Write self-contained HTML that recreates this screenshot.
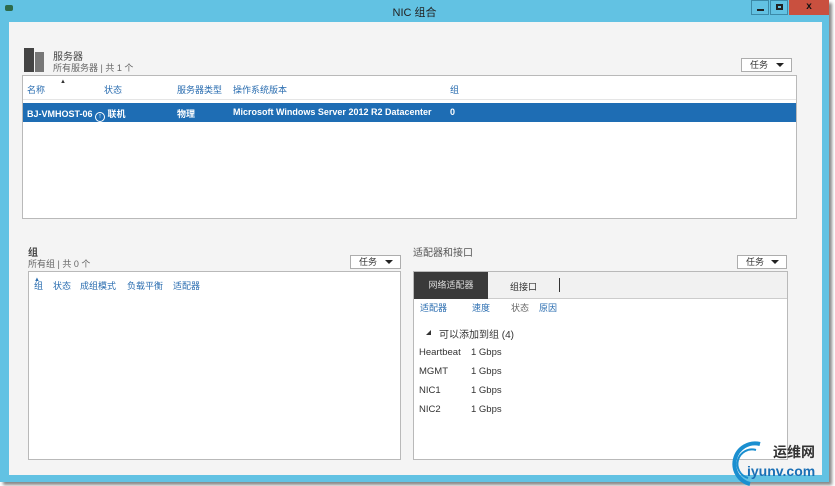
<!DOCTYPE html>
<html><head><meta charset="utf-8"><style>
*{margin:0;padding:0;box-sizing:border-box}
body{width:835px;height:486px;background:#fff;font-family:"Liberation Sans","Noto Sans CJK SC",sans-serif;font-size:9px;color:#333;position:relative;overflow:hidden}
.a{position:absolute}
.frame{left:0;top:0;width:829px;height:482px;background:#62c2e3;box-shadow:3px 3px 3px #888}
.content{left:9px;top:22px;width:813px;height:453px;background:#f4f4f4}
.box{background:#fff;border:1px solid #b9b9b9}
.task{background:#fff;border:1px solid #adadad;font-size:9px;padding-left:8px;line-height:12px;color:#333}
.task:after{content:"";position:absolute;right:7px;top:4px;border:4px solid transparent;border-top:4px solid #222;border-bottom:0}
.blue{color:#2a6db0}
</style></head><body>
<div class="a frame"></div>
<div class="a" style="left:5px;top:5px;width:8px;height:6px;background:#2d6b4a;border-radius:2px"></div>
<div class="a" style="left:0;top:4px;width:829px;text-align:center;font-size:11px;color:#222">NIC 组合</div>
<div class="a" style="left:751px;top:0;width:18px;height:15px;border:1px solid #3c8aa8;background:#62c2e3"><div class="a" style="left:5px;top:8px;width:7px;height:2px;background:#222"></div></div>
<div class="a" style="left:770px;top:0;width:18px;height:15px;border:1px solid #3c8aa8;background:#62c2e3"><div class="a" style="left:5px;top:3px;width:7px;height:6px;border:2px solid #222"></div></div>
<div class="a" style="left:789px;top:0;width:40px;height:15px;background:#c9503f;color:#111;font-weight:bold;text-align:center;font-size:10px;line-height:14px">x</div>
<div class="a content"></div>

<!-- servers -->
<div class="a" style="left:24px;top:48px;width:10px;height:24px;background:#444"></div>
<div class="a" style="left:35px;top:52px;width:9px;height:20px;background:#777"></div>
<div class="a" style="left:53px;top:48px;font-size:10px;color:#444">服务器</div>
<div class="a" style="left:53px;top:61px;color:#666">所有服务器 | 共 1 个</div>
<div class="a task" style="left:741px;top:58px;width:51px;height:14px">任务</div>
<div class="a box" style="left:22px;top:75px;width:775px;height:144px"></div>
<div class="a" style="left:23px;top:76px;width:773px;height:24px;border-bottom:1px solid #e5e5e5"></div>
<div class="a blue" style="left:27px;top:83px">名称</div>
<div class="a" style="left:60px;top:79px;font-size:6px">▲</div>
<div class="a blue" style="left:104px;top:83px">状态</div>
<div class="a blue" style="left:177px;top:83px">服务器类型</div>
<div class="a blue" style="left:233px;top:83px">操作系统版本</div>
<div class="a blue" style="left:450px;top:83px">组</div>
<div class="a" style="left:23px;top:103px;width:773px;height:19px;background:#1e6db4"></div>
<div class="a" style="left:27px;top:107px;color:#fff;font-weight:bold">BJ-VMHOST-06 <span style="display:inline-block;width:10px;height:10px;border:1.5px solid #fff;border-radius:50%;font-size:7px;line-height:7px;text-align:center;vertical-align:-1px">↑</span> 联机</div>
<div class="a" style="left:177px;top:107px;color:#fff;font-weight:bold">物理</div>
<div class="a" style="left:233px;top:107px;color:#fff;font-weight:bold">Microsoft Windows Server 2012 R2 Datacenter</div>
<div class="a" style="left:450px;top:107px;color:#fff;font-weight:bold">0</div>

<!-- groups -->
<div class="a" style="left:28px;top:244px;font-size:10px;color:#444;font-weight:bold">组</div>
<div class="a" style="left:28px;top:257px;color:#666">所有组 | 共 0 个</div>
<div class="a task" style="left:350px;top:255px;width:51px;height:14px">任务</div>
<div class="a box" style="left:28px;top:271px;width:373px;height:189px"></div>
<div class="a blue" style="left:34px;top:277px;font-size:6px">▲</div>
<div class="a blue" style="left:34px;top:280px;line-height:12px"><span style="display:inline-block;width:19px">组</span><span style="display:inline-block;width:27px">状态</span><span style="display:inline-block;width:47px">成组模式</span><span style="display:inline-block;width:46px">负载平衡</span>适配器</div>

<!-- adapters -->
<div class="a" style="left:413px;top:244px;font-size:10px;color:#555">适配器和接口</div>
<div class="a task" style="left:737px;top:255px;width:50px;height:14px">任务</div>
<div class="a box" style="left:413px;top:271px;width:375px;height:189px"></div>
<div class="a" style="left:414px;top:272px;width:373px;height:27px;background:#f1f1f1;border-bottom:1px solid #ccc"></div>
<div class="a" style="left:414px;top:272px;width:74px;height:27px;background:#3a3a3a;color:#ddd;text-align:center;line-height:27px">网络适配器</div>
<div class="a" style="left:510px;top:280px;color:#333">组接口</div>
<div class="a" style="left:559px;top:278px;width:1px;height:14px;background:#333"></div>
<div class="a blue" style="left:420px;top:302px;line-height:12px"><span style="display:inline-block;width:52px">适配器</span><span style="display:inline-block;width:39px">速度</span><span style="display:inline-block;width:28px;color:#666">状态</span>原因</div>
<div class="a" style="left:426px;top:330px;width:0;height:0;border-left:5px solid transparent;border-bottom:5px solid #333"></div>
<div class="a" style="left:439px;top:326px;font-size:10px;color:#333">可以添加到组 (4)</div>
<div class="a" style="left:419px;top:343px;line-height:19px;color:#333;font-size:9.5px">Heartbeat<br>MGMT<br>NIC1<br>NIC2</div>
<div class="a" style="left:471px;top:343px;line-height:19px;color:#333;font-size:9.5px">1 Gbps<br>1 Gbps<br>1 Gbps<br>1 Gbps</div>

<!-- watermark -->
<svg class="a" style="left:730px;top:440px" width="40" height="46"><path d="M30 4 A18 18 0 1 0 20 44" stroke="#1a8fd0" stroke-width="4" fill="none"/><path d="M26 10 A12 12 0 1 0 18 38" stroke="#1a8fd0" stroke-width="2" fill="none"/></svg>
<div class="a" style="left:773px;top:442px;font-size:14px;color:#333;font-weight:bold">运维网</div>
<div class="a" style="left:747px;top:463px;font-size:14px;color:#1a6fb5;font-weight:bold">iyunv.com</div>
</body></html>
